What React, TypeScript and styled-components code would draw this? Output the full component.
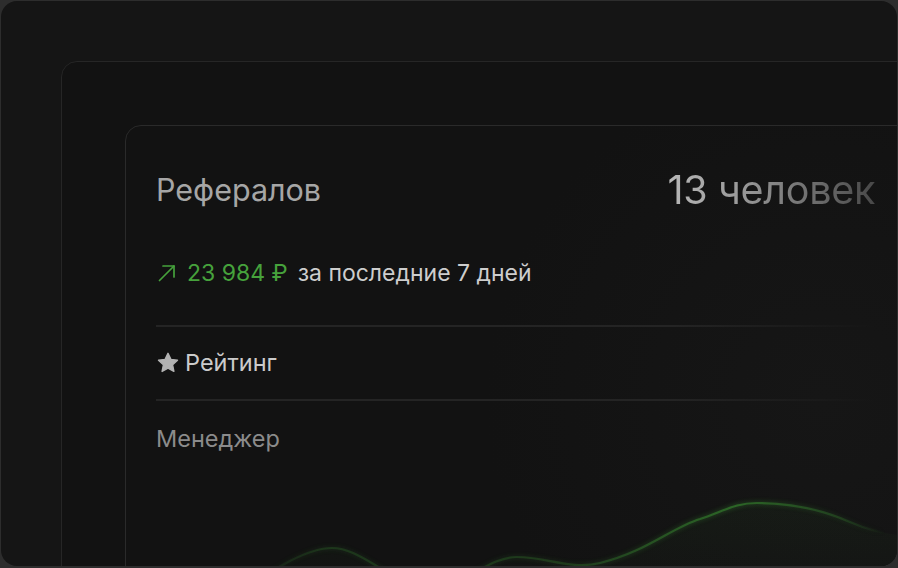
import styled, { createGlobalStyle } from 'styled-components';

const GlobalStyle = createGlobalStyle`
  html, body {
    margin: 0;
    padding: 0;
    background: #2d2d2d;
    font-family: Inter, "Noto Sans", "Liberation Sans", sans-serif;
  }
`;

const Frame = styled.div`
  width: 896px;
  height: 565px;
  margin: 1px;
  border-radius: 16px;
  background: #151515;
  overflow: hidden;
  display: flex;
  padding: 60px 0 0 60px;
  box-sizing: border-box;
`;

const MiddleCard = styled.div`
  flex-shrink: 0;
  width: 900px;
  height: 560px;
  border: 1px solid #262626;
  border-radius: 16px;
  background: #121212;
  padding: 63px 0 0 63px;
  box-sizing: border-box;
  display: flex;
`;

const InnerCard = styled.div`
  flex-shrink: 0;
  width: 820px;
  height: 500px;
  border: 1px solid #2a2a2a;
  border-radius: 16px;
  background: radial-gradient(circle at 85% 55%, #161616 0, #121212 45%);
  box-sizing: border-box;
  display: flex;
  flex-direction: column;
`;

const Content = styled.div`
  width: 719px;
  padding: 44px 0 0 30px;
  display: flex;
  flex-direction: column;
`;

const Header = styled.div`
  display: flex;
  justify-content: space-between;
  align-items: center;
  height: 40px;
`;

const Title = styled.div`
  font-size: 30.5px;
  line-height: 40px;
  color: #a6a6a6;
`;

const Count = styled.div`
  font-size: 39.5px;
  line-height: 40px;
  letter-spacing: -0.3px;
  background: linear-gradient(90deg, #b8b8b8 0%, #9a9a9a 35%, #484848 100%);
  -webkit-background-clip: text;
  background-clip: text;
  color: transparent;
`;

const Growth = styled.div`
  margin-top: 49px;
  display: flex;
  align-items: center;
  font-size: 23px;
  line-height: 28px;
  gap: 10px;
`;

const Amount = styled.span`
  color: #46a23c;
  display: flex;
  align-items: center;
  gap: 9px;
`;

const Period = styled.span`
  color: #cdcdcd;
`;

const Divider = styled.div<{ $top?: number }>`
  height: 2px;
  margin-top: ${p => p.$top ?? 0}px;
  background: linear-gradient(90deg, #242424 0%, #242424 72%, rgba(36, 36, 36, 0) 100%);
`;

const Row = styled.div<{ $muted?: boolean }>`
  display: flex;
  align-items: center;
  gap: 5px;
  font-size: 23.5px;
  line-height: 28px;
  color: ${p => (p.$muted ? '#8b8b8b' : '#cbcbcb')};
  height: ${p => (p.$muted ? 'auto' : '72px')};
  padding-top: ${p => (p.$muted ? '24px' : '0')};
`;

const Chart = styled.svg`
  display: block;
  margin-top: 37px;
  flex-shrink: 0;
`;

const ArrowIcon = () => (
  <svg width="22" height="22" viewBox="0 0 22 22" fill="none" stroke="#46a23c" strokeWidth="1.7" strokeLinecap="round" strokeLinejoin="round">
    <path d="M3.5 18.5 L18 4" />
    <path d="M7 4 H18 V15" />
  </svg>
);

const StarIcon = () => (
  <svg width="24" height="24" viewBox="0 0 24 24" fill="#b3b3b3" stroke="#b3b3b3" strokeWidth="1.4" strokeLinejoin="round">
    <path d="M12 2.3 L14.9 8.4 L21.5 9.2 L16.6 13.8 L17.9 20.4 L12 17.1 L6.1 20.4 L7.4 13.8 L2.5 9.2 L9.1 8.4 Z" />
  </svg>
);

const wave =
  'M100 110 C150 78 180 58 206 58 C236 58 262 92 300 96 C338 99 360 67 391 67 C420 67 445 80 474 73 C520 62 545 38 574 29 C600 20 610 13 631 13 C660 13 690 17 724 32 C740 39 750 42 790 48';

export default function App() {
  return (
    <>
      <GlobalStyle />
      <Frame>
        <MiddleCard>
          <InnerCard>
            <Content>
              <Header>
                <Title>Рефералов</Title>
                <Count>13 человек</Count>
              </Header>
              <Growth>
                <Amount>
                  <ArrowIcon />
                  23 984 ₽
                </Amount>
                <Period>за последние 7 дней</Period>
              </Growth>
              <Divider $top={38} />
              <Row>
                <StarIcon />
                Рейтинг
              </Row>
              <Divider />
              <Row $muted>Менеджер</Row>
            </Content>
            <Chart width="772" height="80" viewBox="0 0 772 80">
              <defs>
                <linearGradient id="strokeFade" x1="100" y1="0" x2="780" y2="0" gradientUnits="userSpaceOnUse">
                  <stop offset="0" stopColor="#2d6628" stopOpacity="0" />
                  <stop offset="0.15" stopColor="#2d6628" stopOpacity="0.35" />
                  <stop offset="0.5" stopColor="#2d6628" stopOpacity="0.4" />
                  <stop offset="0.75" stopColor="#2f7029" stopOpacity="0.85" />
                  <stop offset="0.9" stopColor="#2d6628" stopOpacity="0.45" />
                  <stop offset="0.97" stopColor="#2d6628" stopOpacity="0" />
                </linearGradient>
                <linearGradient id="areaFade" x1="0" y1="0" x2="0" y2="1">
                  <stop offset="0" stopColor="#2d6628" stopOpacity="0.08" />
                  <stop offset="1" stopColor="#2d6628" stopOpacity="0" />
                </linearGradient>
                <filter id="glow" x="-10%" y="-50%" width="120%" height="200%">
                  <feGaussianBlur stdDeviation="2" />
                </filter>
              </defs>
              <path d={`${wave} L790 80 L100 80 Z`} fill="url(#areaFade)" />
              <path d={wave} fill="none" stroke="url(#strokeFade)" strokeWidth="4" opacity="0.5" filter="url(#glow)" />
              <path d={wave} fill="none" stroke="url(#strokeFade)" strokeWidth="2.2" />
            </Chart>
          </InnerCard>
        </MiddleCard>
      </Frame>
    </>
  );
}
